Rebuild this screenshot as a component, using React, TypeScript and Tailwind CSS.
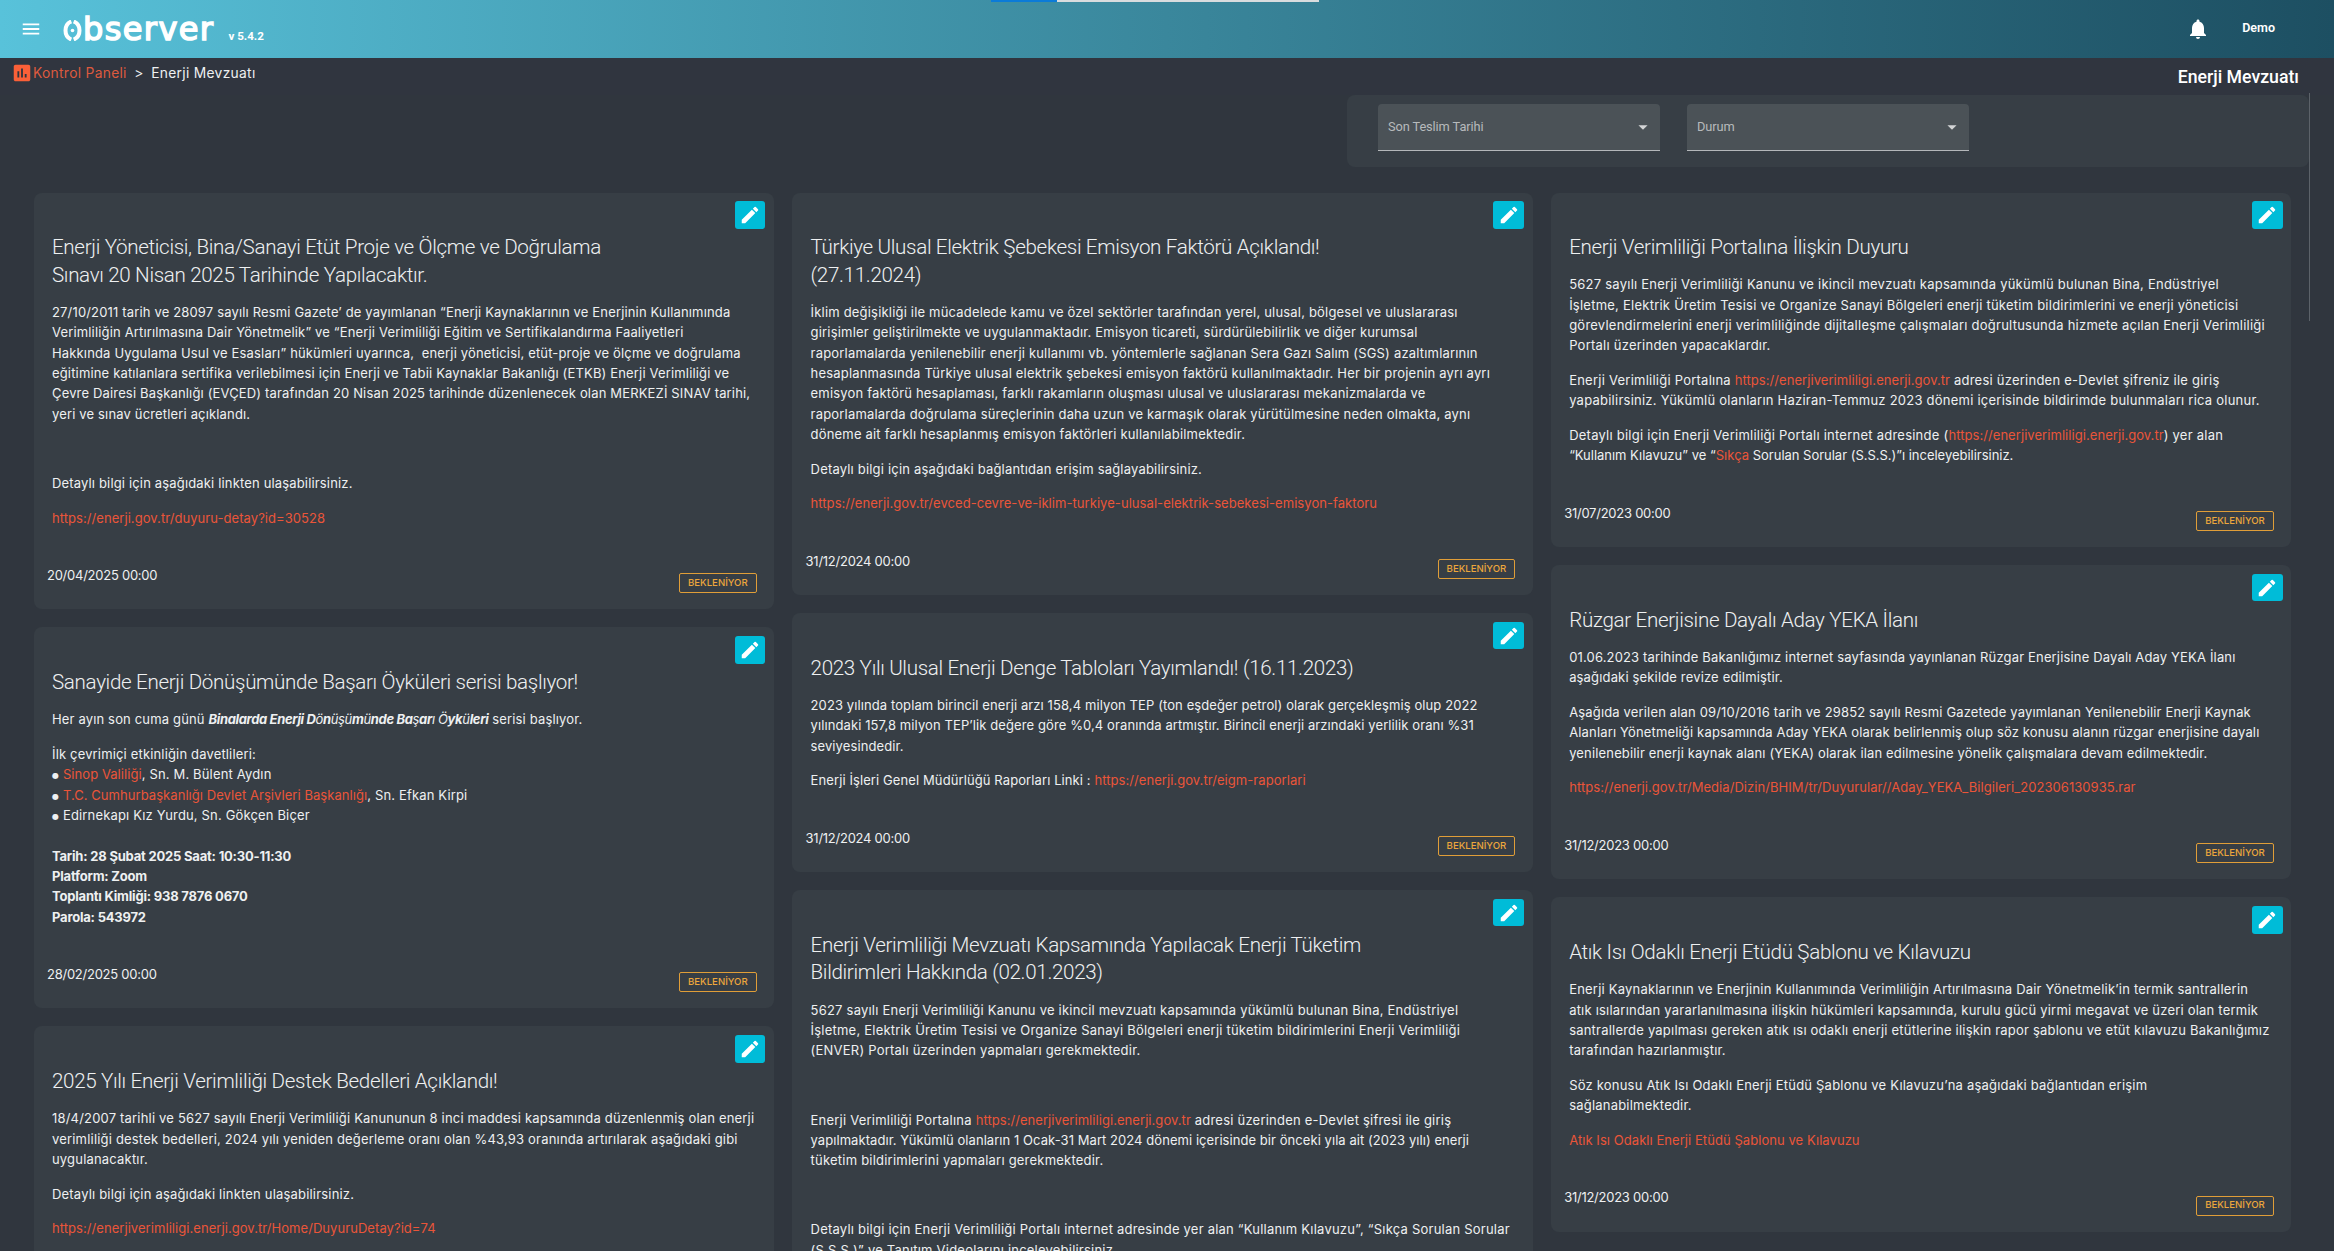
import { Fragment, type ReactNode } from "react"
import { MdArrowDropDown, MdAssessment, MdEdit, MdMenu, MdNotifications } from "react-icons/md"

type Announcement = {
    title: string[]
    body: ReactNode[][]
    date: string
    tracking?: string
}

function A({ children }: { children: ReactNode }) {
    return <a className="tracking-[0.06px] text-[#ea5539]">{children}</a>
}

function B({ children }: { children: ReactNode }) {
    return <b className="tracking-[-0.2px]">{children}</b>
}

function Dot() {
    return <span className="relative top-[-1px] font-['DejaVu_Sans',sans-serif] text-[8px] leading-none">●</span>
}

function Lines({ lines }: { lines: ReactNode[] }) {
    return (
        <>
            {lines.map((line, i) => (
                <Fragment key={i}>
                    {i > 0 && <br />}
                    {line}
                </Fragment>
            ))}
        </>
    )
}

const columns: Announcement[][] = [
    [
        {
            title: ["Enerji Yöneticisi, Bina/Sanayi Etüt Proje ve Ölçme ve Doğrulama", "Sınavı 20 Nisan 2025 Tarihinde Yapılacaktır."],
            body: [
                [
                    "27/10/2011 tarih ve 28097 sayılı Resmi Gazete’ de yayımlanan “Enerji Kaynaklarının ve Enerjinin Kullanımında",
                    "Verimliliğin Artırılmasına Dair Yönetmelik” ve “Enerji Verimliliği Eğitim ve Sertifikalandırma Faaliyetleri",
                    "Hakkında Uygulama Usul ve Esasları” hükümleri uyarınca,\u00a0 enerji yöneticisi, etüt-proje ve ölçme ve doğrulama",
                    "eğitimine katılanlara sertifika verilebilmesi için Enerji ve Tabii Kaynaklar Bakanlığı (ETKB) Enerji Verimliliği ve",
                    "Çevre Dairesi Başkanlığı (EVÇED) tarafından 20 Nisan 2025 tarihinde düzenlenecek olan MERKEZİ SINAV tarihi,",
                    "yeri ve sınav ücretleri açıklandı.",
                ],
                ["\u00a0"],
                ["Detaylı bilgi için aşağıdaki linkten ulaşabilirsiniz."],
                [<A>https://enerji.gov.tr/duyuru-detay?id=30528</A>],
            ],
            date: "20/04/2025 00:00",
        },
        {
            title: ["Sanayide Enerji Dönüşümünde Başarı Öyküleri serisi başlıyor!"],
            body: [
                [
                    <>
                        Her ayın son cuma günü{" "}
                        <i className="tracking-[-0.35px]">
                            <b>Binalarda Enerji D</b>ö<b>n</b>üşü<b>m</b>ü<b>nde Ba</b>ş<b>ar</b>ı Ö<b>yk</b>ü<b>leri</b>
                        </i>{" "}
                        serisi başlıyor.
                    </>,
                ],
                [
                    "İlk çevrimiçi etkinliğin davetlileri:",
                    <><Dot /> <A>Sinop Valiliği</A>, Sn. M. Bülent Aydın</>,
                    <><Dot /> <A>T.C. Cumhurbaşkanlığı Devlet Arşivleri Başkanlığı</A>, Sn. Efkan Kirpi</>,
                    <><Dot /> Edirnekapı Kız Yurdu, Sn. Gökçen Biçer</>,
                    "",
                    <B>Tarih: 28 Şubat 2025 Saat: 10:30-11:30</B>,
                    <B>Platform: Zoom</B>,
                    <B>Toplantı Kimliği: 938 7876 0670</B>,
                    <B>Parola: 543972</B>,
                ],
            ],
            date: "28/02/2025 00:00",
        },
        {
            title: ["2025 Yılı Enerji Verimliliği Destek Bedelleri Açıklandı!"],
            body: [
                [
                    "18/4/2007 tarihli ve 5627 sayılı Enerji Verimliliği Kanununun 8 inci maddesi kapsamında düzenlenmiş olan enerji",
                    "verimliliği destek bedelleri, 2024 yılı yeniden değerleme oranı olan %43,93 oranında artırılarak aşağıdaki gibi",
                    "uygulanacaktır.",
                ],
                ["Detaylı bilgi için aşağıdaki linkten ulaşabilirsiniz."],
                [<A>https://enerjiverimliligi.enerji.gov.tr/Home/DuyuruDetay?id=74</A>],
            ],
            date: "31/12/2025 00:00",
            tracking: "tracking-[0.19px]",
        },
    ],
    [
        {
            title: ["Türkiye Ulusal Elektrik Şebekesi Emisyon Faktörü Açıklandı!", "(27.11.2024)"],
            body: [
                [
                    "İklim değişikliği ile mücadelede kamu ve özel sektörler tarafından yerel, ulusal, bölgesel ve uluslararası",
                    "girişimler geliştirilmekte ve uygulanmaktadır. Emisyon ticareti, sürdürülebilirlik ve diğer kurumsal",
                    "raporlamalarda yenilenebilir enerji kullanımı vb. yöntemlerle sağlanan Sera Gazı Salım (SGS) azaltımlarının",
                    "hesaplanmasında Türkiye ulusal elektrik şebekesi emisyon faktörü kullanılmaktadır. Her bir projenin ayrı ayrı",
                    "emisyon faktörü hesaplaması, farklı rakamların oluşması ulusal ve uluslararası mekanizmalarda ve",
                    "raporlamalarda doğrulama süreçlerinin daha uzun ve karmaşık olarak yürütülmesine neden olmakta, aynı",
                    "döneme ait farklı hesaplanmış emisyon faktörleri kullanılabilmektedir.",
                ],
                ["Detaylı bilgi için aşağıdaki bağlantıdan erişim sağlayabilirsiniz."],
                [<A>https://enerji.gov.tr/evced-cevre-ve-iklim-turkiye-ulusal-elektrik-sebekesi-emisyon-faktoru</A>],
            ],
            date: "31/12/2024 00:00",
            tracking: "tracking-[0.19px]",
        },
        {
            title: ["2023 Yılı Ulusal Enerji Denge Tabloları Yayımlandı! (16.11.2023)"],
            body: [
                [
                    "2023 yılında toplam birincil enerji arzı 158,4 milyon TEP (ton eşdeğer petrol) olarak gerçekleşmiş olup 2022",
                    "yılındaki 157,8 milyon TEP’lik değere göre %0,4 oranında artmıştır. Birincil enerji arzındaki yerlilik oranı %31",
                    "seviyesindedir.",
                ],
                [<>Enerji İşleri Genel Müdürlüğü Raporları Linki : <A>https://enerji.gov.tr/eigm-raporlari</A></>],
            ],
            date: "31/12/2024 00:00",
            tracking: "tracking-[0.1px]",
        },
        {
            title: ["Enerji Verimliliği Mevzuatı Kapsamında Yapılacak Enerji Tüketim", "Bildirimleri Hakkında (02.01.2023)"],
            body: [
                [
                    "5627 sayılı Enerji Verimliliği Kanunu ve ikincil mevzuatı kapsamında yükümlü bulunan Bina, Endüstriyel",
                    "İşletme, Elektrik Üretim Tesisi ve Organize Sanayi Bölgeleri enerji tüketim bildirimlerini Enerji Verimliliği",
                    "(ENVER) Portalı üzerinden yapmaları gerekmektedir.",
                ],
                ["\u00a0"],
                [
                    <>Enerji Verimliliği Portalına <A>https://enerjiverimliligi.enerji.gov.tr</A> adresi üzerinden e-Devlet şifresi ile giriş</>,
                    <span className="tracking-[0.06px]">yapılmaktadır. Yükümlü olanların 1 Ocak-31 Mart 2024 dönemi içerisinde bir önceki yıla ait (2023 yılı) enerji</span>,
                    "tüketim bildirimlerini yapmaları gerekmektedir.",
                ],
                ["\u00a0"],
                [
                    "Detaylı bilgi için Enerji Verimliliği Portalı internet adresinde yer alan “Kullanım Kılavuzu”, “Sıkça Sorulan Sorular",
                    "(S.S.S.)” ve Tanıtım Videolarını inceleyebilirsiniz.",
                ],
            ],
            date: "31/12/2023 00:00",
            tracking: "tracking-[0.22px]",
        },
    ],
    [
        {
            title: ["Enerji Verimliliği Portalına İlişkin Duyuru"],
            body: [
                [
                    "5627 sayılı Enerji Verimliliği Kanunu ve ikincil mevzuatı kapsamında yükümlü bulunan Bina, Endüstriyel",
                    "İşletme, Elektrik Üretim Tesisi ve Organize Sanayi Bölgeleri enerji tüketim bildirimlerini ve enerji yöneticisi",
                    "görevlendirmelerini enerji verimliliğinde dijitalleşme çalışmaları doğrultusunda hizmete açılan Enerji Verimliliği",
                    "Portalı üzerinden yapacaklardır.",
                ],
                [
                    <>Enerji Verimliliği Portalına <A>https://enerjiverimliligi.enerji.gov.tr</A> adresi üzerinden e-Devlet şifreniz ile giriş</>,
                    "yapabilirsiniz. Yükümlü olanların Haziran-Temmuz 2023 dönemi içerisinde bildirimde bulunmaları rica olunur.",
                ],
                [
                    <>Detaylı bilgi için Enerji Verimliliği Portalı internet adresinde (<A>https://enerjiverimliligi.enerji.gov.tr</A>) yer alan</>,
                    <span className="tracking-[-0.02px]">“Kullanım Kılavuzu” ve “<A>Sıkça</A> Sorulan Sorular (S.S.S.)”ı inceleyebilirsiniz.</span>,
                ],
            ],
            date: "31/07/2023 00:00",
            tracking: "tracking-[0.24px]",
        },
        {
            title: ["Rüzgar Enerjisine Dayalı Aday YEKA İlanı"],
            body: [
                [
                    "01.06.2023 tarihinde Bakanlığımız internet sayfasında yayınlanan Rüzgar Enerjisine Dayalı Aday YEKA İlanı",
                    "aşağıdaki şekilde revize edilmiştir.",
                ],
                [
                    "Aşağıda verilen alan 09/10/2016 tarih ve 29852 sayılı Resmi Gazetede yayımlanan Yenilenebilir Enerji Kaynak",
                    "Alanları Yönetmeliği kapsamında Aday YEKA olarak belirlenmiş olup söz konusu alanın rüzgar enerjisine dayalı",
                    "yenilenebilir enerji kaynak alanı (YEKA) olarak ilan edilmesine yönelik çalışmalara devam edilmektedir.",
                ],
                [<A>https://enerji.gov.tr/Media/Dizin/BHIM/tr/Duyurular//Aday_YEKA_Bilgileri_202306130935.rar</A>],
            ],
            date: "31/12/2023 00:00",
        },
        {
            title: ["Atık Isı Odaklı Enerji Etüdü Şablonu ve Kılavuzu"],
            body: [
                [
                    "Enerji Kaynaklarının ve Enerjinin Kullanımında Verimliliğin Artırılmasına Dair Yönetmelik’in termik santrallerin",
                    "atık ısılarından yararlanılmasına ilişkin hükümleri kapsamında, kurulu gücü yirmi megavat ve üzeri olan termik",
                    "santrallerde yapılması gereken atık ısı odaklı enerji etütlerine ilişkin rapor şablonu ve etüt kılavuzu Bakanlığımız",
                    "tarafından hazırlanmıştır.",
                ],
                ["Söz konusu Atık Isı Odaklı Enerji Etüdü Şablonu ve Kılavuzu’na aşağıdaki bağlantıdan erişim", "sağlanabilmektedir."],
                [<A>Atık Isı Odaklı Enerji Etüdü Şablonu ve Kılavuzu</A>],
            ],
            date: "31/12/2023 00:00",
            tracking: "tracking-[0.21px]",
        },
    ],
]

function Logo() {
    return (
        <div className="flex items-end text-white">
            <svg className="mb-[1.5px] mr-px" width="19" height="21" viewBox="0 0 19 21" fill="none" stroke="currentColor" strokeWidth="4">
                <path d="M8.3 1.5C4.5 3 2.5 6 2.5 10.5s2 7.5 5.8 9" />
                <path d="M10.7 1.5c3.8 1.5 5.8 4.5 5.8 9s-2 7.5-5.8 9" />
                <circle cx="9.5" cy="10.5" r="1.8" fill="currentColor" stroke="none" />
            </svg>
            <span className="font-['DejaVu_Sans',sans-serif] text-[32px] leading-[26px] tracking-[1.4px] [-webkit-text-stroke:1.5px_white]">bserver</span>
        </div>
    )
}

function Header() {
    return (
        <header className="relative flex h-[58px] shrink-0 items-center bg-linear-to-r from-[#58c2da] via-[#3a879c] to-[#1d4f62] pl-5 text-white">
            <div className="absolute left-[991px] top-0 flex h-[2px] w-[328px] bg-[#d9dcde]">
                <div className="w-[66px] bg-[#0b7bd8]" />
            </div>
            <MdMenu size={22} />
            <div className="ml-[21px]">
                <Logo />
            </div>
            <span className="ml-[14px] mt-[16px] text-[11.6px] font-bold">v 5.4.2</span>
            <div className="ml-auto flex items-center pr-[59px]">
                <MdNotifications size={24} className="mt-[-1px]" />
                <span className="mt-[-1px] ml-[32px] text-[12.5px] font-semibold">Demo</span>
            </div>
        </header>
    )
}

function Select({ label }: { label: string }) {
    return (
        <div className="flex h-[47px] w-[282px] items-center justify-between rounded-t-[4px] border-b border-[#b4b7ba] bg-[#4b5257] pl-[10px] pr-[6px]">
            <span className="text-[12.8px] tracking-[-0.1px] text-[#b7babc]">{label}</span>
            <MdArrowDropDown size={22} className="text-[#d3d5d6]" />
        </div>
    )
}

function AnnouncementCard({ item }: { item: Announcement }) {
    return (
        <div className="relative rounded-[8px] bg-[#373e45] pb-4 pl-[18.2px] pt-[41.6px] text-[#eef0f1]">
            <button className="absolute right-[8.6px] top-[8.7px] flex h-[27.5px] w-[30.5px] items-center justify-center rounded-[3px] bg-[#00bcd8] text-white">
                <MdEdit size={22} />
            </button>
            <h2 className="whitespace-nowrap text-[20.6px] font-light leading-[27.5px] tracking-[-0.33px]">
                <Lines lines={item.title} />
            </h2>
            <div
                className={`mt-[12.8px] flex flex-col gap-[14.33px] whitespace-nowrap font-['Inter',sans-serif] text-[13px] leading-[20.33px] ${item.tracking ?? "tracking-[0.16px]"}`}
            >
                {item.body.map((lines, i) => (
                    <p key={i}>
                        <Lines lines={lines} />
                    </p>
                ))}
            </div>
            <div className="-ml-[5px] mr-[17.4px] mt-[37.2px] flex h-[28.2px] items-start justify-between font-['Inter',sans-serif]">
                <span className="text-[13px] leading-[20.33px] tracking-[-0.25px]">{item.date}</span>
                <span className="flex h-5 w-[77.5px] items-center justify-center self-end rounded-[2px] border border-[#e09e38] text-[9.6px] font-medium text-[#eda73c]">
                    BEKLENİYOR
                </span>
            </div>
        </div>
    )
}

export default function App() {
    return (
        <div className="relative flex h-[1251px] w-[2334px] flex-col overflow-hidden bg-[#30363e] font-['Roboto',sans-serif]">
            <Header />
            <div className="absolute left-[2309px] top-[93px] h-[228px] w-px bg-[#5c6269]" />
            <div className="flex h-[37px] shrink-0 items-start justify-between bg-[#30353f] pl-[11px] pr-[35px]">
                <div className="flex items-center pt-[4px] font-['Inter',sans-serif] text-[13.8px] leading-[22px] tracking-[0.3px] text-[#eef0f1]">
                    <MdAssessment size={22} className="text-[#fb6038]" />
                    <span className="text-[#dd5a3e]">Kontrol Paneli</span>
                    <span className="mx-[7.5px]">&gt;</span>
                    <span>Enerji Mevzuatı</span>
                </div>
                <h1 className="pt-[7px] text-[17.7px] font-medium leading-[24px] text-white">Enerji Mevzuatı</h1>
            </div>
            <div className="ml-[1347px] flex h-[72px] w-[962px] shrink-0 gap-[27px] rounded-[8px] bg-[#373e45] pl-[31px] pt-[8.5px]">
                <Select label="Son Teslim Tarihi" />
                <Select label="Durum" />
            </div>
            <main className="mt-[25.5px] flex items-start gap-[18.4px] pl-[33.8px]">
                {columns.map((column, i) => (
                    <div key={i} className="flex w-[740.2px] shrink-0 flex-col gap-[18.2px]">
                        {column.map((item) => (
                            <AnnouncementCard key={item.title[0]} item={item} />
                        ))}
                    </div>
                ))}
            </main>
        </div>
    )
}
